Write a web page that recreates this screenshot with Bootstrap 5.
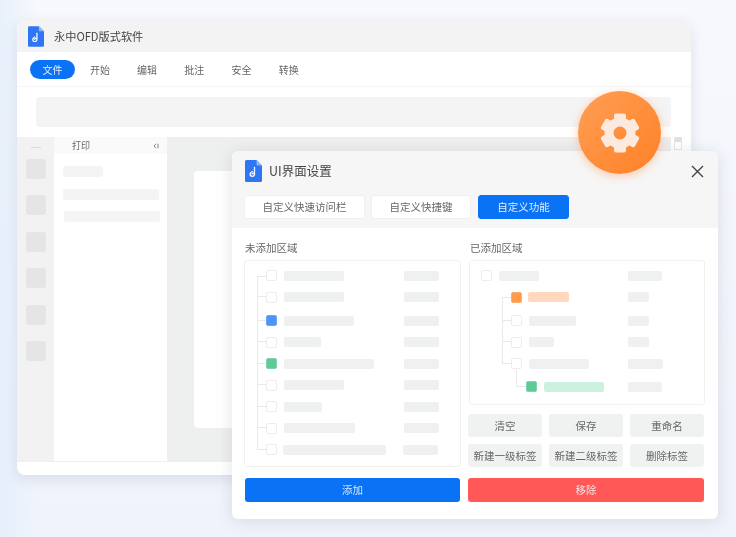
<!DOCTYPE html>
<html lang="zh-CN">
<head>
  <meta charset="UTF-8" />
  <meta name="viewport" content="width=device-width, initial-scale=1.0"/>
  <title>永中OFD版式软件</title>

  <link href="https://cdn.jsdelivr.net/npm/bootstrap@5.3.3/dist/css/bootstrap.min.css" rel="stylesheet">
  <script src="https://cdn.jsdelivr.net/npm/bootstrap@5.3.3/dist/js/bootstrap.bundle.min.js"></script>

  <style>
    html, body {
      margin: 0;
      height: 100%;
      overflow: hidden;
    }

    body {
      font-family: "Noto Sans CJK SC", "Noto Sans", sans-serif;
      background: #f0f4fb;
      color: #555;
    }

    #stage {
      position: relative;
      width: 736px;
      height: 537px;
      overflow: hidden;
      background:
        linear-gradient(90deg, rgba(228, 238, 251, .8) 0, rgba(228, 238, 251, 0) 5%),
        linear-gradient(180deg, #f7f9fd 0, #f3f6fc 45%, #eff3fb 100%);
      filter: blur(0.6px);
    }

    /* main window */
    .app-win {
      position: absolute;
      left: 17px;
      top: 20px;
      width: 674px;
      height: 455px;
      border: 0;
      border-radius: 8px;
      overflow: hidden;
      box-shadow: 0 4px 14px rgba(120, 135, 165, .2);
    }

    .app-title {
      height: 32px;
      background: #f3f3f3;
      padding-left: 11px;
      gap: 10px;
      font-size: 11.2px;
      color: #444;
    }

    .app-tabs {
      height: 35px;
      padding-left: 13px;
      gap: 1px;
      border-bottom: 1px solid #f5f5f5;
    }

    .app-tabs .nav-link {
      height: 19px;
      padding: 0 13.1px;
      font-size: 10px;
      line-height: 19px;
      color: #666;
    }

    .app-tabs .nav-link.active {
      margin-right: .8px;
      padding: 0 12.500px;
      background: #0a72f5;
      color: #e4effd;
      border-radius: 10px;
    }

    .app-tools {
      height: 50px;
      padding: 10px 20px 10px 19px;
    }

    .tools-block {
      height: 30px;
      background: #f4f4f4;
      border-radius: 4px;
    }

    .app-main {
      height: 324px;
    }

    .app-rail {
      width: 37px;
      background: #f2f2f2;
      padding-left: 9px;
    }

    .rail-dash {
      width: 10px;
      height: 1px;
      margin: 10px 0 11px 5px;
      background: #dcdcdc;
    }

    .rail-icon {
      width: 20px;
      height: 20px;
      margin-bottom: 16.4px;
      background: #e5e5e5;
      border-radius: 3px;
    }

    .app-panel {
      width: 113px;
    }

    .panel-head {
      height: 17px;
      padding: 0 8px 0 18px;
      background: #fafafa;
      font-size: 9px;
      color: #666;
    }

    .panel-line {
      height: 11px;
      margin: 0 0 11.500px 9px;
      background: #f4f4f4;
      border-radius: 2px;
    }

    .line-short { width: 40px; margin-top: 12px; }
    .line-long { width: 96px; }
    .line-shift { margin-left: 10px; }

    .app-canvas {
      width: 504px;
      background: #eeefef;
      padding: 34px 0 0 27px;
    }

    .page-sheet {
      height: 257px;
      background: #fff;
      border-radius: 4px;
    }

    .app-scroll {
      width: 8px;
      height: 13px;
      margin-left: 3px;
      background: linear-gradient(#dfe1e1 0 4px, #fff 4px);
      border: 1px solid #e6e6e6;
    }

    .app-foot {
      height: 14px;
      border-top: 1px solid #f0f0f0;
    }

    /* dialog */
    .set-dialog {
      position: absolute;
      left: 232px;
      top: 151px;
      width: 486px;
      height: 368px;
      border: 0;
      border-radius: 6px;
      overflow: hidden;
      box-shadow: 0 2px 16px rgba(120, 130, 150, .22);
    }

    .dialog-head {
      height: 77px;
      padding: 9px 14px 0 12px;
      background: #f6f6f6;
      border: 0;
      border-radius: 0 !important;
    }

    .dialog-title {
      height: 22px;
      gap: 7px;
      margin-left: 1px;
      font-size: 12.5px;
      color: #444;
    }

    .tab-row {
      margin-top: 13px;
      gap: 6px;
    }

    .tab-btn {
      height: 24px;
      padding: 0;
      background: #fff;
      border: 1px solid #f0f0f0;
      border-radius: 3px;
      font-size: 10.5px;
      line-height: 22px;
      color: #666;
    }

    .tab-btn.on {
      margin-left: 1px;
      background: #0a72f5;
      border-color: #0a72f5;
      color: #e4effd;
    }

    .tab-a { width: 121px; }
    .tab-b { width: 100px; }
    .tab-c { width: 91px; }

    .dialog-body {
      padding: 13px 13px 0 12px;
      gap: 7px;
    }

    .col-left { width: 217px; }
    .col-right { width: 237px; }

    .area-label {
      height: 19px;
      margin-left: 1px;
      font-size: 10.5px;
      line-height: 14px;
      color: #666;
    }

    .col-right .area-label { margin-left: 2px; }

    .tree-box {
      background: #fff;
      border: 1px solid #f0f0f0;
      border-radius: 3px;
    }

    .box-left {
      height: 207px;
      padding: 4px 0 0 21px;
    }

    .box-right {
      height: 145px;
      margin-left: 1px;
      padding: 4px 0 0 11px;
    }

    .tree-row {
      position: relative;
      height: 21.5px;
    }

    .row-gap {
      margin-top: 2px;
    }

    .row-low {
      margin-top: 1.500px;
    }

    .tree-check {
      flex: none;
      width: 11px;
      height: 11px;
      background: #fff;
      border: 1px solid #ededed;
      border-radius: 2px;
    }

    .tree-check.blue { background: #4d94fb; border-color: #6aa5fb; }
    .tree-check.green { background: #5ecb97; border-color: #7ad6aa; }
    .tree-check.orange { background: #ff9c4c; border-color: #ffad6b; }

    .tree-bar {
      flex: none;
      height: 10px;
      background: #eff1f1;
      border-radius: 2px;
    }

    .tree-bar.peach { background: #ffd8bd; }
    .tree-bar.mint { background: #ccf1de; }

    .tree-row::before {
      content: "";
      position: absolute;
      left: -9px;
      width: 9px;
      top: -11px;
      bottom: 50%;
      border-left: 1px solid #e9e9e9;
      border-bottom: 1px solid #e9e9e9;
    }

    .tree-row.row-gap::before { top: -13px; }
    .tree-row.no-up::before { top: 50%; bottom: auto; height: 0; border-bottom: 0; border-top: 1px solid #e9e9e9; }
    .tree-row.no-line::before { display: none; }

    .branch-1 { padding-left: 30px; }
    .branch-1::before { left: 21px; }
    .branch-2 { padding-left: 45px; }
    .tree-row.branch-2::before { left: 35px; width: 10px; top: -6px; }
    .branch-1.no-up::before { border-left: 1px solid #e9e9e9; height: 1px; }

    .btn-grid {
      display: grid;
      grid-template-columns: repeat(3, 74px);
      grid-auto-rows: 23px;
      gap: 7px;
      margin-top: 9px;
    }

    .gray-btn {
      padding: 0;
      background: #f0f1f1;
      border: 0;
      border-radius: 3px;
      font-size: 10.5px;
      line-height: 23px;
      color: #666;
    }

    .main-btn {
      display: block;
      height: 24px;
      margin-top: 11px;
      padding: 0;
      border: 0;
      border-radius: 3px;
      font-size: 10.5px;
      line-height: 24px;
    }

    .main-btn.add { width: 215px; margin-left: 1px; background: #0a72f5; color: #d5e6fc; }
    .main-btn.del { width: 236px; background: #ff5856; color: #ffe0df; }

    /* orange gear badge */
    .gear-badge {
      position: absolute;
      left: 578px;
      top: 91px;
      width: 83px;
      height: 83px;
      border-radius: 50%;
      background: linear-gradient(135deg, #ff9f55, #ff8026);
      box-shadow: 0 2px 10px rgba(255, 130, 50, .4);
    }
  </style>
</head>
<body>

  <div id="stage">

    <svg width="0" height="0" class="position-absolute">
      <symbol id="docLogo" viewBox="0 0 17 22">
        <path d="M1.5 0H11.5L17 5.5V20.5A1.5 1.5 0 0 1 15.5 22H1.5A1.5 1.5 0 0 1 0 20.5V1.500A1.5 1.5 0 0 1 1.500 0Z" fill="#2f76f3"/>
        <path d="M11.500 0L17 5.500H12.500A1 1 0 0 1 11.500 4.500Z" fill="#8db6fa"/>
        <path d="M9.500 7.500V14.500A2.300 2.300 0 0 1 5 14.500C5 13 6 12 7.300 11.500M9.500 13.500A1.500 1.500 0 0 0 7 14" fill="none" stroke="#fff" stroke-width="1.300" stroke-linecap="round"/>
      </symbol>
    </svg>

    <!-- Hauptfenster -->
    <div class="card app-win">
      <div class="app-title d-flex align-items-center">
        <svg width="16" height="21"><use href="#docLogo"/></svg>
        <span>永中OFD版式软件</span>
      </div>
      <ul class="nav app-tabs align-items-center">
        <li class="nav-item"><a class="nav-link active" href="#">文件</a></li>
        <li class="nav-item"><a class="nav-link" href="#">开始</a></li>
        <li class="nav-item"><a class="nav-link" href="#">编辑</a></li>
        <li class="nav-item"><a class="nav-link" href="#">批注</a></li>
        <li class="nav-item"><a class="nav-link" href="#">安全</a></li>
        <li class="nav-item"><a class="nav-link" href="#">转换</a></li>
      </ul>
      <div class="app-tools">
        <div class="tools-block"></div>
      </div>
      <div class="app-main d-flex">
        <div class="app-rail">
          <div class="rail-dash"></div>
          <div class="rail-icon"></div>
          <div class="rail-icon"></div>
          <div class="rail-icon"></div>
          <div class="rail-icon"></div>
          <div class="rail-icon"></div>
          <div class="rail-icon"></div>
        </div>
        <div class="app-panel">
          <div class="panel-head d-flex justify-content-between align-items-center">
            <span>打印</span>
            <svg width="6" height="6" viewBox="0 0 6 6">
              <path d="M3 .8L1 3L3 5.200M5 .8V5.200" fill="none" stroke="#777" stroke-width=".9"/>
            </svg>
          </div>
          <div class="panel-line line-short"></div>
          <div class="panel-line line-long"></div>
          <div class="panel-line line-long line-shift"></div>
        </div>
        <div class="app-canvas">
          <div class="page-sheet"></div>
        </div>
        <div class="app-scroll"></div>
      </div>
      <div class="app-foot"></div>
    </div>

    <!-- Dialog -->
    <div class="card set-dialog">
      <div class="card-header dialog-head">
        <div class="dialog-title d-flex align-items-center">
          <svg width="17" height="22"><use href="#docLogo"/></svg>
          <span class="flex-grow-1">UI界面设置</span>
          <svg width="13" height="13" viewBox="0 0 13 13">
            <path d="M1 1L12 12M12 1L1 12" stroke="#444" stroke-width="1.400" fill="none"/>
          </svg>
        </div>
        <div class="tab-row d-flex">
          <button class="btn tab-btn tab-a">自定义快速访问栏</button>
          <button class="btn tab-btn tab-b">自定义快捷键</button>
          <button class="btn tab-btn tab-c on">自定义功能</button>
        </div>
      </div>
      <div class="dialog-body d-flex" id="dialogBody">
        <div class="col-left">
          <div class="area-label">未添加区域</div>
          <div class="tree-box box-left" id="leftTree"></div>
          <button class="btn main-btn add">添加</button>
        </div>
        <div class="col-right">
          <div class="area-label">已添加区域</div>
          <div class="tree-box box-right" id="rightTree"></div>
          <div class="btn-grid">
            <button class="btn gray-btn">清空</button>
            <button class="btn gray-btn">保存</button>
            <button class="btn gray-btn">重命名</button>
            <button class="btn gray-btn">新建一级标签</button>
            <button class="btn gray-btn">新建二级标签</button>
            <button class="btn gray-btn">删除标签</button>
          </div>
          <button class="btn main-btn del">移除</button>
        </div>
      </div>
    </div>

    <!-- Zahnrad -->
    <div class="gear-badge d-flex align-items-center justify-content-center">
      <svg width="40" height="40" viewBox="-20 -20 40 40" id="gearIcon"></svg>
    </div>
  </div>

  <script>
    // Zahnrad: sechs Zaehne plus Ring
    let gear = '<g fill="#fbeadd">';
    for (let i = 0; i < 6; i++) {
      gear += `<rect x="-6" y="-19.500" width="12" height="9" rx="2" transform="rotate(${i * 60})"/>`;
    }
    gear += '</g><circle r="11" fill="none" stroke="#fbeadd" stroke-width="9"/>';
    document.getElementById('gearIcon').innerHTML = gear;

    // check: Farbe der Box, bar: [Breite, Klasse], right: Breite rechts
    const leftRows = [
      { bar: 60, gap: 60, right: 35, cls: 'no-up' },
      { bar: 60, gap: 60, right: 35 },
      { bar: 70, gap: 50, right: 35, check: 'blue', cls: 'row-gap' },
      { bar: 37, gap: 83, right: 35 },
      { bar: 90, gap: 30, right: 35, check: 'green' },
      { bar: 60, gap: 60, right: 35 },
      { bar: 38, gap: 82, right: 35 },
      { bar: 71, gap: 49, right: 35 },
      { bar: 103, gap: 17, right: 35, inner: 6 }
    ];
    const rightRows = [
      { bar: 40, gap: 89, right: 34, cls: 'no-line', inner: 7 },
      { bar: 41, gap: 59, right: 21, check: 'orange', bcls: 'peach', cls: 'branch-1 no-up', inner: 6 },
      { bar: 47, gap: 52, right: 21, cls: 'branch-1 row-gap', inner: 7 },
      { bar: 25, gap: 74, right: 21, cls: 'branch-1', inner: 7 },
      { bar: 60, gap: 39, right: 35, cls: 'branch-1', inner: 7 },
      { bar: 60, gap: 24, right: 34, check: 'green', bcls: 'mint', cls: 'branch-2 row-low', inner: 7 }
    ];

    function buildTree(id, rows) {
      const box = document.getElementById(id);
      rows.forEach(r => {
        box.innerHTML += `
          <div class="tree-row d-flex align-items-center ${r.cls || ''}">
            <span class="tree-check ${r.check || ''}"></span>
            <span class="tree-bar ${r.bcls || ''}" style="width:${r.bar}px;margin-left:${r.inner || 7}px"></span>
            <span class="tree-bar" style="width:${r.right}px;margin-left:${r.gap}px"></span>
          </div>`;
      });
    }

    buildTree('leftTree', leftRows);
    buildTree('rightTree', rightRows);
  </script>

</body>
</html>
